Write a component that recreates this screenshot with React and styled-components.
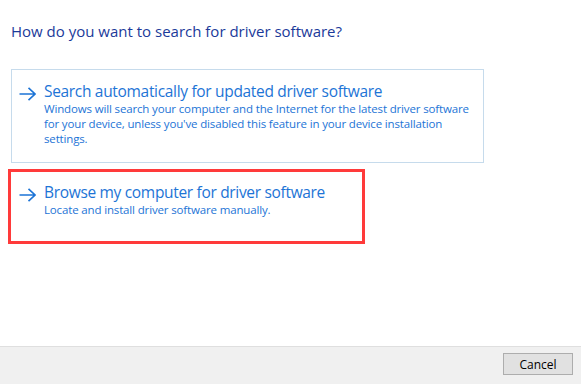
import React from "react";
import styled, { createGlobalStyle } from "styled-components";

const Global = createGlobalStyle`
  html, body {
    margin: 0;
    padding: 0;
    background: #ffffff;
  }
  body {
    font-family: "Open Sans", "Noto Sans", sans-serif;
  }
`;

const Window = styled.div`
  width: 581px;
  height: 384px;
  display: flex;
  flex-direction: column;
  background: #ffffff;
`;

const Content = styled.div`
  flex: 1;
  padding: 21px 0 0 8px;
`;

const Heading = styled.h1`
  margin: 0 0 28px 3px;
  font-size: 15px;
  font-weight: 400;
  line-height: 20px;
  color: #1b3a9a;
`;

const Options = styled.div`
  display: flex;
  flex-direction: column;
  gap: 6px;
`;

const Option = styled.div`
  box-sizing: border-box;
  width: ${(p) => p.$width}px;
  min-height: ${(p) => p.$height}px;
  margin-left: ${(p) => (p.$marked ? 0 : 3)}px;
  border: ${(p) => (p.$marked ? "3px solid #ff3a3a" : "1px solid #c6dbec")};
  padding: ${(p) => (p.$marked ? "11px 8px 0 8px" : "12px 8px 0 7px")};
  display: flex;
  gap: 8px;
  cursor: pointer;
`;

const Arrow = styled.svg`
  flex: none;
  width: 17px;
  height: 14px;
  margin-top: 5px;
`;

const Texts = styled.div`
  display: flex;
  flex-direction: column;
`;

const Title = styled.div`
  font-size: 15.5px;
  line-height: 19px;
  color: #1d74d6;
  letter-spacing: -0.32px;
`;

const Desc = styled.div`
  font-size: 11.5px;
  line-height: 15px;
  color: #1d74d6;
  width: 432px;
  letter-spacing: -0.15px;
`;

const Footer = styled.div`
  height: 37px;
  border-top: 1px solid #dfdfdf;
  background: #f0f0f0;
  display: flex;
  align-items: center;
  justify-content: flex-end;
  padding-right: 8px;
`;

const Button = styled.button`
  box-sizing: border-box;
  width: 70px;
  height: 22px;
  margin-bottom: 3px;
  background: #e1e1e1;
  border: 1px solid #adadad;
  font-family: "Open Sans", "Noto Sans", sans-serif;
  font-size: 12px;
  color: #000;
  padding: 0;
`;

function ArrowIcon() {
  return (
    <Arrow viewBox="0 0 17 14">
      <path
        d="M0.5 7 H16 M9.5 0.8 L16 7 L9.5 13.2"
        fill="none"
        stroke="#1d74d6"
        strokeWidth="1.6"
      />
    </Arrow>
  );
}

export default function App() {
  return (
    <Window>
      <Global />
      <Content>
        <Heading>How do you want to search for driver software?</Heading>
        <Options>
          <Option $width={473} $height={94}>
            <ArrowIcon />
            <Texts>
              <Title>Search automatically for updated driver software</Title>
              <Desc>
                Windows will search your computer and the Internet for the
                latest driver software for your device, unless you've disabled
                this feature in your device installation settings.
              </Desc>
            </Texts>
          </Option>
          <Option $marked $width={357} $height={75}>
            <ArrowIcon />
            <Texts>
              <Title>Browse my computer for driver software</Title>
              <Desc>Locate and install driver software manually.</Desc>
            </Texts>
          </Option>
        </Options>
      </Content>
      <Footer>
        <Button>Cancel</Button>
      </Footer>
    </Window>
  );
}
